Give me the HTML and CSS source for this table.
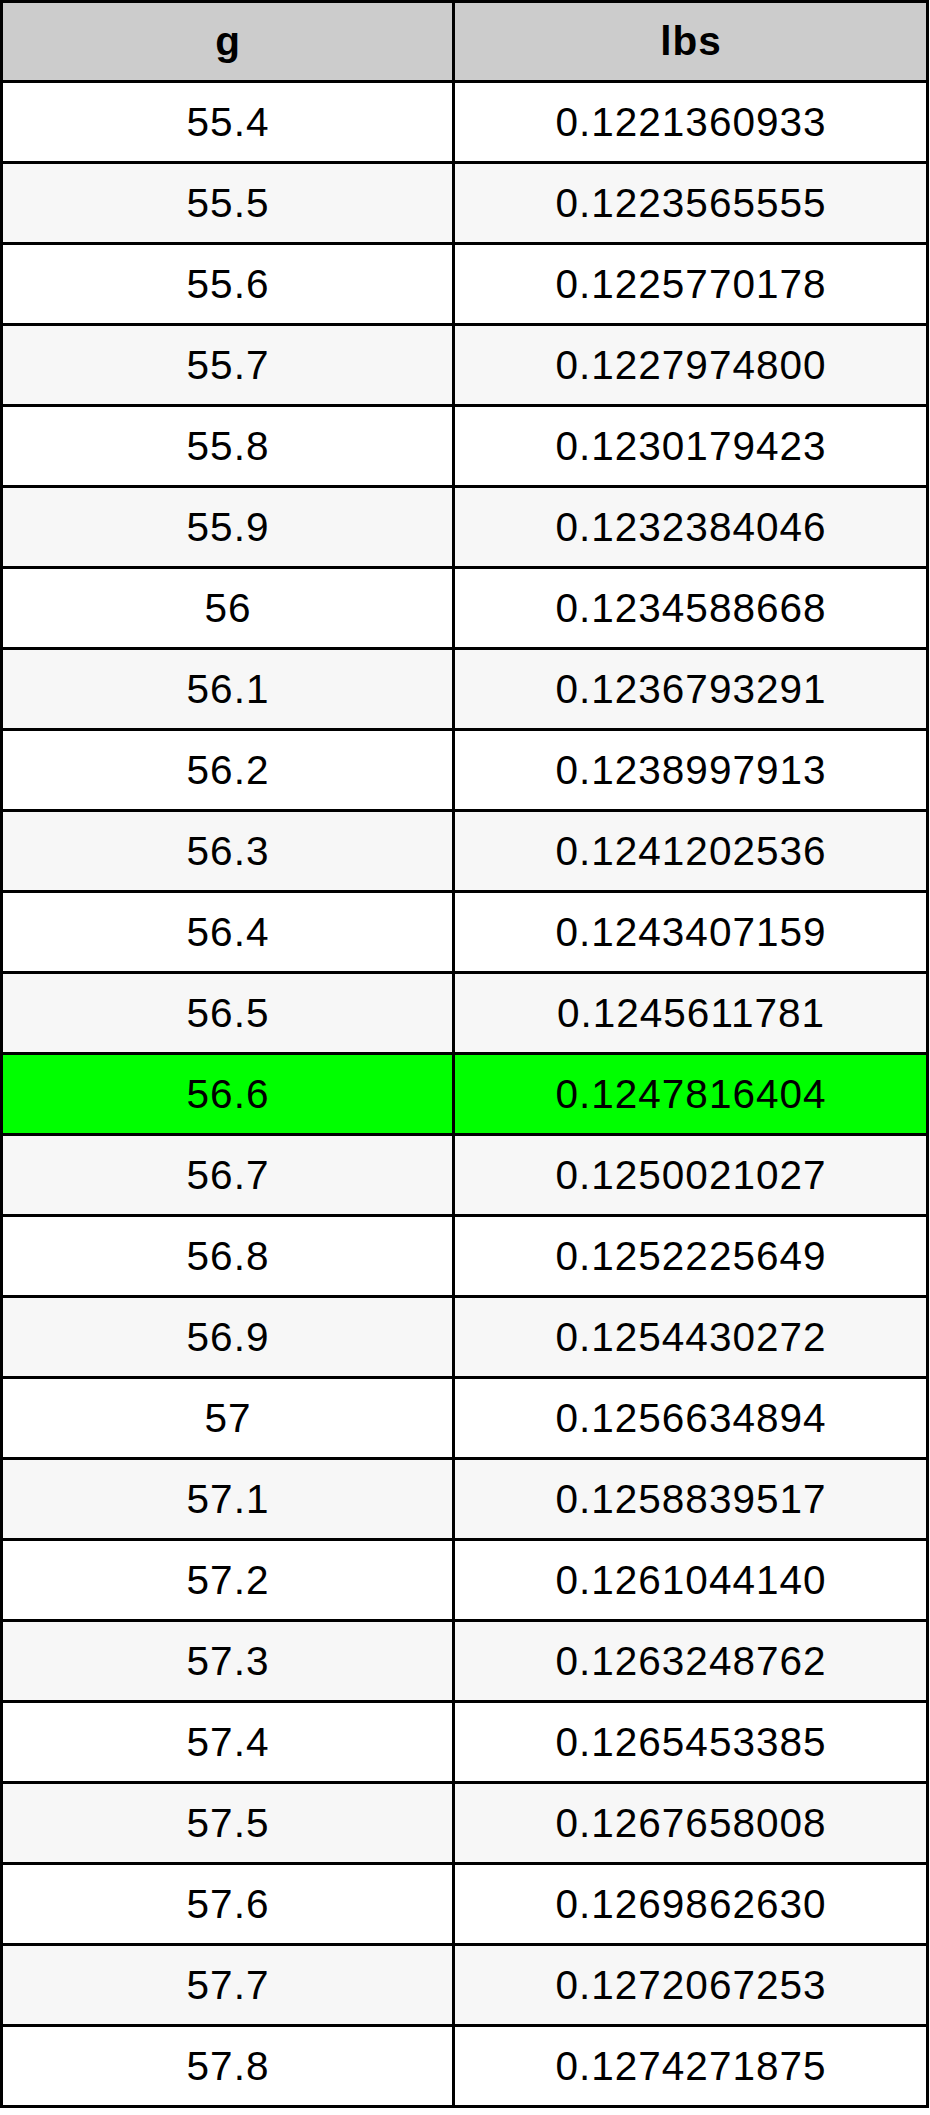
FILE: index.html
```html
<!DOCTYPE html>
<html lang="en">
<head>
<meta charset="utf-8">
<title>g to lbs</title>
<link rel="stylesheet" href="styles.css">
</head>
<body>
<div class="table">
  <div class="row head"><div class="cell c1">g</div><div class="cell c2">lbs</div></div>
  <div class="row"><div class="cell c1">55.4</div><div class="cell c2">0.1221360933</div></div>
  <div class="row alt"><div class="cell c1">55.5</div><div class="cell c2">0.1223565555</div></div>
  <div class="row"><div class="cell c1">55.6</div><div class="cell c2">0.1225770178</div></div>
  <div class="row alt"><div class="cell c1">55.7</div><div class="cell c2">0.1227974800</div></div>
  <div class="row"><div class="cell c1">55.8</div><div class="cell c2">0.1230179423</div></div>
  <div class="row alt"><div class="cell c1">55.9</div><div class="cell c2">0.1232384046</div></div>
  <div class="row"><div class="cell c1">56</div><div class="cell c2">0.1234588668</div></div>
  <div class="row alt"><div class="cell c1">56.1</div><div class="cell c2">0.1236793291</div></div>
  <div class="row"><div class="cell c1">56.2</div><div class="cell c2">0.1238997913</div></div>
  <div class="row alt"><div class="cell c1">56.3</div><div class="cell c2">0.1241202536</div></div>
  <div class="row"><div class="cell c1">56.4</div><div class="cell c2">0.1243407159</div></div>
  <div class="row alt"><div class="cell c1">56.5</div><div class="cell c2">0.1245611781</div></div>
  <div class="row hl"><div class="cell c1">56.6</div><div class="cell c2">0.1247816404</div></div>
  <div class="row alt"><div class="cell c1">56.7</div><div class="cell c2">0.1250021027</div></div>
  <div class="row"><div class="cell c1">56.8</div><div class="cell c2">0.1252225649</div></div>
  <div class="row alt"><div class="cell c1">56.9</div><div class="cell c2">0.1254430272</div></div>
  <div class="row"><div class="cell c1">57</div><div class="cell c2">0.1256634894</div></div>
  <div class="row alt"><div class="cell c1">57.1</div><div class="cell c2">0.1258839517</div></div>
  <div class="row"><div class="cell c1">57.2</div><div class="cell c2">0.1261044140</div></div>
  <div class="row alt"><div class="cell c1">57.3</div><div class="cell c2">0.1263248762</div></div>
  <div class="row"><div class="cell c1">57.4</div><div class="cell c2">0.1265453385</div></div>
  <div class="row alt"><div class="cell c1">57.5</div><div class="cell c2">0.1267658008</div></div>
  <div class="row"><div class="cell c1">57.6</div><div class="cell c2">0.1269862630</div></div>
  <div class="row alt"><div class="cell c1">57.7</div><div class="cell c2">0.1272067253</div></div>
  <div class="row"><div class="cell c1">57.8</div><div class="cell c2">0.1274271875</div></div>
</div>
</body>
</html>
```

FILE: styles.css
```css
html, body {
  margin: 0;
  padding: 0;
  background: #ffffff;
}

.table {
  width: 929px;
  box-sizing: border-box;
  border-top: 3px solid #000;
  border-left: 3px solid #000;
  font-family: "Liberation Sans", Arial, sans-serif;
  font-size: 40.5px;
  letter-spacing: 1px;
  color: #000;
}

.row {
  display: flex;
  background: #ffffff;
}

.row.alt {
  background: #f7f7f7;
}

.row.hl {
  background: #00ff00;
}

.row.head {
  background: #cccccc;
  font-weight: bold;
}

.cell {
  box-sizing: border-box;
  height: 81px;
  border-right: 3px solid #000;
  border-bottom: 3px solid #000;
  display: flex;
  align-items: center;
  justify-content: center;
  padding-left: 1px;
}

.row.head .cell {
  height: 80px;
}

.c1 {
  width: 452px;
}

.c2 {
  width: 474px;
}
```
